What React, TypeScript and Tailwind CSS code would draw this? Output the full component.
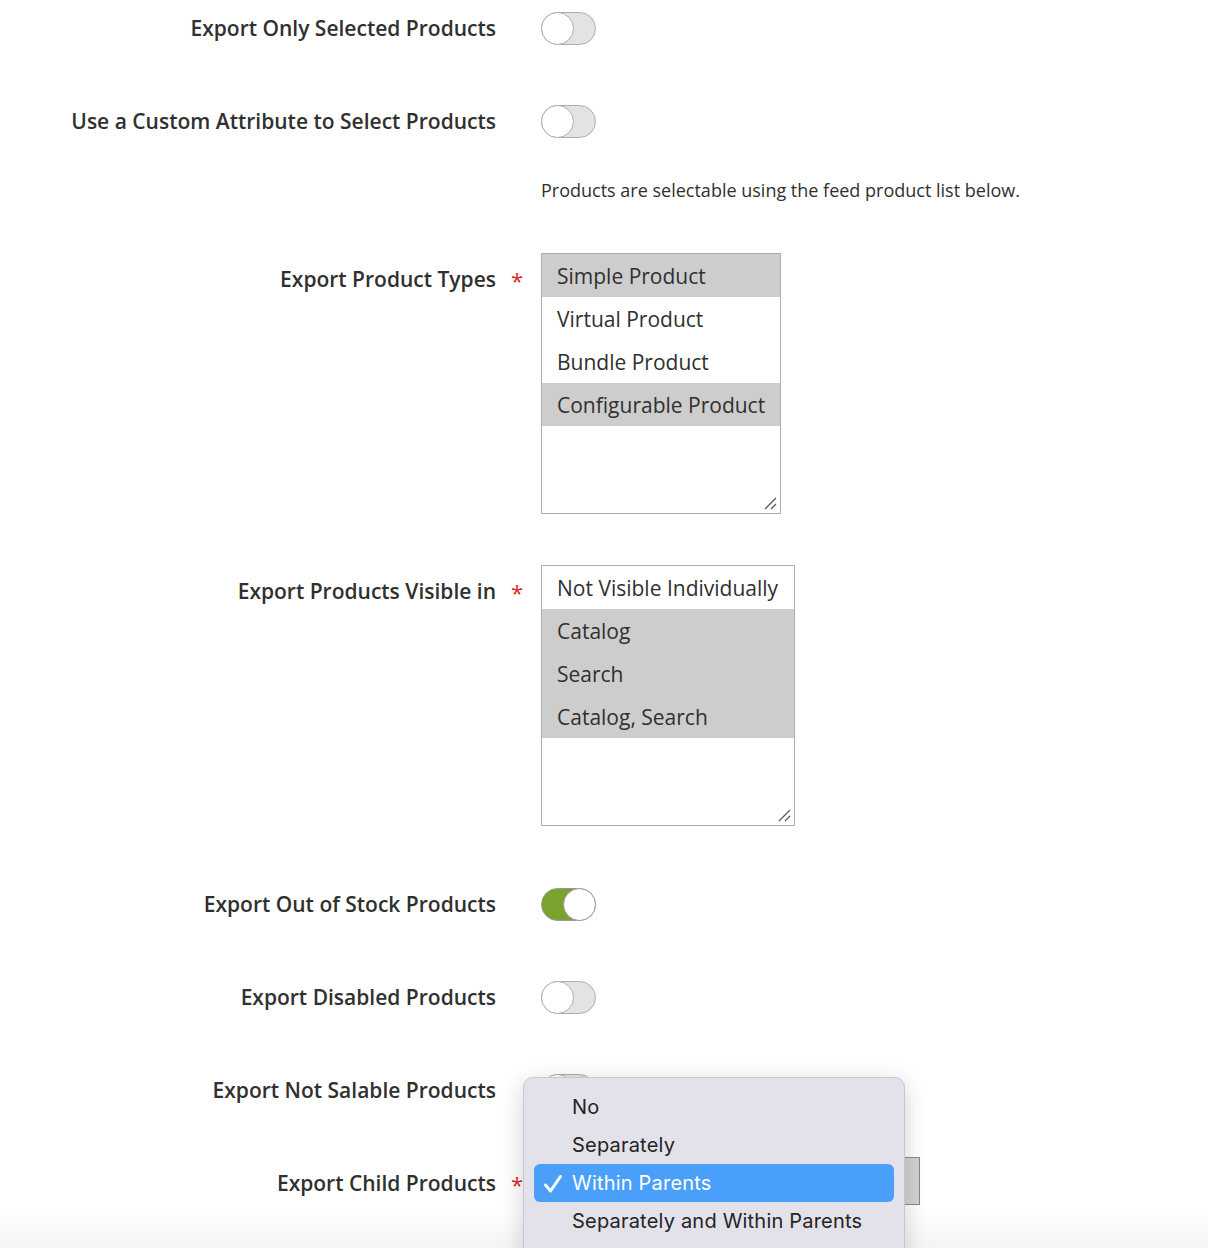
import { ReactNode } from "react";

const Toggle = ({ on = false }: { on?: boolean }) => (
  <div
    className={`relative w-[55px] h-[33px] rounded-full border ${
      on ? "bg-[#79a22e] border-[#9a9a9a]" : "bg-[#e3e3e3] border-[#adadad]"
    }`}
  >
    <span
      className={`absolute top-[-1px] w-[33px] h-[33px] rounded-full bg-white border ${
        on ? "right-[-1px] border-[#9a9a9a]" : "left-[-1px] border-[#adadad]"
      }`}
    />
  </div>
);

const Resize = () => (
  <svg className="absolute right-[3px] bottom-[3px]" width="14" height="14" viewBox="0 0 14 14">
    <path d="M2 13 L13 2 M8 13 L13 8" stroke="#555" strokeWidth="1.2" />
  </svg>
);

const MultiSelect = ({
  options,
  selected,
  width,
}: {
  options: string[];
  selected: number[];
  width: string;
}) => (
  <div className={`relative ${width} h-[261px] border border-[#adadad] bg-white`}>
    {options.map((o, i) => (
      <div
        key={o}
        className={`h-[43px] pt-[1px] leading-[42px] pl-[15px] text-[21px] text-[#303030] ${
          selected.includes(i) ? "bg-[#cdcdcd]" : ""
        }`}
      >
        {o}
      </div>
    ))}
    <Resize />
  </div>
);

const Row = ({
  label,
  required,
  boxed,
  className = "",
  children,
}: {
  label: string;
  required?: boolean;
  boxed?: boolean;
  className?: string;
  children: ReactNode;
}) => (
  <div className={`flex items-start ${className}`}>
    <div
      className={`w-[496px] text-right font-semibold text-[21px] leading-[33px] text-[#303030] ${
        boxed ? "mt-[10px]" : ""
      }`}
    >
      {label}
    </div>
    <div className={`w-[45px] pl-[15px] text-[22px] leading-[33px] text-[#e22626] ${boxed ? "mt-[11px]" : ""}`}>
      {required ? "*" : ""}
    </div>
    <div>{children}</div>
  </div>
);

const childOptions = ["No", "Separately", "Within Parents", "Separately and Within Parents"];

export default function App() {
  return (
    <div
      className="relative h-[1248px] w-full overflow-hidden bg-white"
      style={{ fontFamily: '"Open Sans", "Noto Sans", sans-serif' }}
    >
      <div className="pt-[12px]">
        <Row label="Export Only Selected Products">
          <Toggle />
        </Row>

        <Row label="Use a Custom Attribute to Select Products" className="mt-[60px]">
          <Toggle />
          <p className="mt-[40px] text-[18px] leading-[24px] text-[#303030]">
            Products are selectable using the feed product list below.
          </p>
        </Row>

        <Row label="Export Product Types" required boxed className="mt-[51px]">
          <MultiSelect
            width="w-[240px]"
            options={["Simple Product", "Virtual Product", "Bundle Product", "Configurable Product"]}
            selected={[0, 3]}
          />
        </Row>

        <Row label="Export Products Visible in" required boxed className="mt-[51px]">
          <MultiSelect
            width="w-[254px]"
            options={["Not Visible Individually", "Catalog", "Search", "Catalog, Search"]}
            selected={[1, 2, 3]}
          />
        </Row>

        <Row label="Export Out of Stock Products" className="mt-[62px]">
          <Toggle on />
        </Row>

        <Row label="Export Disabled Products" className="mt-[60px]">
          <Toggle />
        </Row>

        <Row label="Export Not Salable Products" className="mt-[60px]">
          <Toggle />
        </Row>

        <Row label="Export Child Products" required boxed className="mt-[50px]">
          <div className="flex w-[379px] h-[48px] border border-[#8a8a8a] bg-white">
            <div className="flex-1" />
            <div className="w-[40px] bg-[#d3d3d3] border-l border-[#8a8a8a]" />
          </div>
        </Row>
      </div>

      <div className="pointer-events-none absolute left-0 right-0 bottom-0 h-[36px] bg-gradient-to-b from-transparent to-[#f4f4f4]" />

      <div
        className="absolute left-[523px] top-[1077px] w-[382px] h-[200px] rounded-[10px] border border-[#c9c7cd] bg-[#e3e1e9] shadow-[0_6px_24px_rgba(0,0,0,0.18)] pt-[10px] px-[10px]"
        style={{ fontFamily: 'Inter, "Noto Sans", sans-serif' }}
      >
        {childOptions.map((o) => {
          const active = o === "Within Parents";
          return (
            <div
              key={o}
              className={`relative h-[38px] leading-[38px] pl-[38px] text-[20px] tracking-[0.2px] rounded-[6px] ${
                active ? "bg-[#4a9ffa] text-white" : "text-[#242424]"
              }`}
            >
              {active && (
                <svg className="absolute left-[9px] top-[10px]" width="20" height="20" viewBox="0 0 20 20">
                  <path d="M2.5 11 L7.5 17 L17.5 2.5" fill="none" stroke="white" strokeWidth="3" strokeLinecap="round" strokeLinejoin="round" />
                </svg>
              )}
              {o}
            </div>
          );
        })}
      </div>
    </div>
  );
}
